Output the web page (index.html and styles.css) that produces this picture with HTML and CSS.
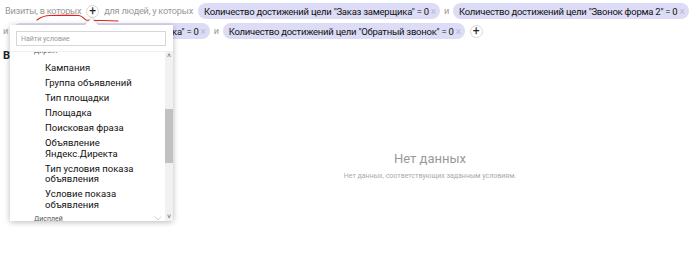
FILE: index.html
```html
<!DOCTYPE html>
<html lang="ru">
<head>
<meta charset="utf-8">
<link rel="stylesheet" href="styles.css">
</head>
<body>
<div class="page">
  <div class="filter">
    <div class="row">
      <span class="word">Визиты, <span class="link">в которых</span></span>
      <span class="plus">+</span>
      <span class="word">для людей, у которых</span>
      <span class="chip">Количество достижений цели "Заказ замерщика" = 0 <span class="x">×</span></span>
      <span class="word and">и</span>
      <span class="chip">Количество достижений цели "Звонок форма 2" = 0 <span class="x">×</span></span>
    </div>
    <div class="row row2">
      <span class="word">и</span>
      <span class="chip">Количество достижений цели "Заявка" = 0 <span class="x">×</span></span>
      <span class="word and">и</span>
      <span class="chip">Количество достижений цели "Обратный звонок" = 0 <span class="x">×</span></span>
      <span class="plus">+</span>
    </div>
  </div>
  <div class="heading">Визиты</div>
  <div class="empty">
    <div class="empty-title">Нет данных</div>
    <div class="empty-text">Нет данных, соответствующих заданным условиям.</div>
  </div>

  <svg class="scribble" width="84" height="10" viewBox="0 0 84 10">
    <path d="M1 8 C5 5 9 3.5 14 3.5 C24 3.5 36 3 43 3.5 C47 4 48 7 50 8 C60 8.5 70 8.5 82 9" fill="none" stroke="#e0231d" stroke-width="1.2" stroke-linecap="round"/>
  </svg>

  <div class="popup">
    <div class="notch"></div>
    <div class="search"><span class="placeholder">Найти условие</span></div>
    <div class="list">
      <div class="items">
        <div class="group cut">Директ</div>
        <div class="item">Кампания</div>
        <div class="item">Группа объявлений</div>
        <div class="item">Тип площадки</div>
        <div class="item">Площадка</div>
        <div class="item">Поисковая фраза</div>
        <div class="item">Объявление<br>Яндекс.Директа</div>
        <div class="item">Тип условия показа<br>объявления</div>
        <div class="item">Условие показа<br>объявления</div>
        <div class="group last">Дисплей <span class="chev"><svg width="8" height="5" viewBox="0 0 8 5"><path d="M0.5 0.5 L4 4 L7.5 0.5" fill="none" stroke="#c8c8c8" stroke-width="0.8"/></svg></span></div>
      </div>
      <div class="scrollbar">
        <span class="arrow">&#708;</span>
        <div class="track"><div class="thumb"></div></div>
        <span class="arrow">&#709;</span>
      </div>
    </div>
  </div>
</div>
</body>
</html>
```
FILE: styles.css
```css
* { box-sizing: border-box; }
html, body { margin: 0; padding: 0; background: #fff; }
body {
  width: 700px;
  height: 260px;
  overflow: hidden;
  font-family: Roboto, "Liberation Sans", Arial, sans-serif;
  font-size: 9.5px;
  letter-spacing: -0.25px;
  color: #000;
}
.page { position: relative; width: 700px; height: 260px; }
.filter {
  display: flex;
  flex-direction: column;
  row-gap: 4px;
  padding: 3px 0 0 3px;
}
.row {
  display: flex;
  align-items: center;
  height: 16px;
  white-space: nowrap;
}
.row > * + * { margin-left: 5px; }
.row > .word:first-child { margin-left: 2px; }
.row2 > .word:first-child { margin-left: 0; }
.row > .and { margin-left: 4px; }
.row > .and + .chip { margin-left: 4px; }
.word { color: #999; line-height: 16px; font-size: 9.2px; }
.link { color: #999; }
.plus {
  width: 13px;
  height: 13px;
  border: 1px solid #d9d9d9;
  border-radius: 50%;
  display: flex;
  align-items: center;
  justify-content: center;
  font-size: 12px;
  letter-spacing: 0;
  line-height: 1;
  color: #222;
  padding-bottom: 1px;
}
.chip {
  display: inline-flex;
  align-items: center;
  height: 16px;
  padding: 0 4px 0 6px;
  border-radius: 8px;
  background: #dcdcf6;
  color: #111;
}
.x { color: #b8b8cc; margin-left: 2px; font-size: 10px; }
.heading {
  font-weight: bold;
  font-size: 11px;
  letter-spacing: 0;
  padding: 10px 0 0 3px;
  color: #222;
}
.empty {
  display: flex;
  flex-direction: column;
  align-items: center;
  padding: 89px 0 0 160px;
  letter-spacing: 0;
}
.empty-title { font-size: 13px; color: #999; }
.empty-text { font-size: 7px; color: #aaa; margin-top: 6px; }

.scribble { position: absolute; left: 36px; top: 12px; }

.popup {
  position: absolute;
  left: 10px;
  top: 25px;
  width: 163px;
  height: 196px;
  background: #fff;
  box-shadow: 0 1px 6px rgba(0,0,0,0.28);
  display: flex;
  flex-direction: column;
  letter-spacing: 0;
}
.notch {
  position: absolute;
  left: 77px;
  top: -5px;
  width: 9px;
  height: 9px;
  background: #fff;
  transform: rotate(45deg);
  box-shadow: -1px -1px 2px rgba(0,0,0,0.12);
}
.search {
  position: relative;
  margin: 6px 7px 0 6px;
  height: 15px;
  border: 1px solid #d6d6d6;
  display: flex;
  align-items: center;
  padding-left: 4px;
  background: #fff;
}
.placeholder { font-size: 7px; color: #999; }
.list {
  flex: 1;
  display: flex;
  margin-top: 5px;
  border-top: 1px solid #f0f0f0;
  overflow: hidden;
}
.items { flex: 1; padding-left: 24px; margin-top: -4px; }
.group {
  font-size: 7px;
  color: #555;
  height: 12px;
  line-height: 12px;
  display: flex;
  justify-content: space-between;
  padding-right: 3px;
}
.group.cut { height: 13px; line-height: 6px; }
.group.last { margin-top: 0; }
.chev { display: flex; align-items: center; }
.item {
  padding-left: 11px;
  font-size: 9.5px;
  line-height: 10.5px;
  color: #111;
  padding-top: 2.25px;
  padding-bottom: 2.25px;
}
.scrollbar {
  width: 8px;
  display: flex;
  flex-direction: column;
  align-items: center;
  background: #f1f1f1;
}
.arrow { font-size: 7px; line-height: 8px; color: #555; height: 8px; }
.track { flex: 1; width: 8px; padding-top: 49px; }
.thumb { width: 8px; height: 54px; background: #c1c1c1; }
```
